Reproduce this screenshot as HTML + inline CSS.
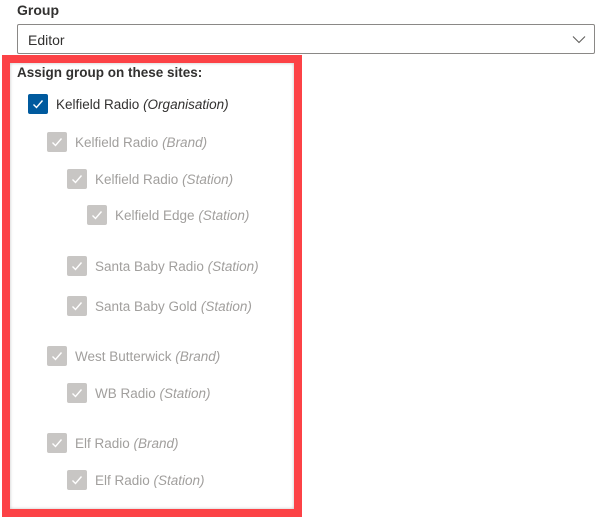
<!DOCTYPE html>
<html><head><style>
body{margin:0;width:605px;height:517px;background:#fff;font-family:"Liberation Sans",sans-serif;position:relative;overflow:hidden;color:#323130}
.a{position:absolute}
.lbl{left:17px;top:2px;font-size:14px;font-weight:bold;color:#323130}
.sel{left:17px;top:24px;width:578px;height:30px;border:1px solid #8a8886;border-radius:2px;box-sizing:border-box}
.sel span{position:absolute;left:10px;top:7px;font-size:14px}
.box{left:2px;top:55px;width:300px;height:462px;border:8px solid #fc4246;box-sizing:border-box;box-shadow:inset 0 0 3px rgba(0,0,0,.25)}
.hd{left:17px;top:65px;font-size:13.5px;font-weight:bold}
.r{position:absolute;height:20px;font-size:13.5px;line-height:21px;color:#a19f9d;white-space:nowrap}
.r i{font-style:italic}
.cb{display:inline-block;width:20px;height:20px;border-radius:2px;background:#c8c6c4;vertical-align:top;margin-right:8px;position:relative}
.cb svg{position:absolute;left:3px;top:3px}
.on{color:#323130}
.on .cb{background:#005a9e}
</style></head><body>
<div class="a lbl">Group</div>
<div class="a sel"><span>Editor</span>
<svg class="a" style="right:8px;top:9px" width="14" height="10" viewBox="0 0 14 10"><path d="M1 2.5L7 8.5L13 2.5" fill="none" stroke="#605e5c" stroke-width="1.1"/></svg></div>
<div class="a box"></div>
<div class="a hd">Assign group on these sites:</div>
<div class="r on" style="left:28px;top:94px"><span class="cb"><svg width="14" height="14" viewBox="0 0 14 14"><path d="M2.5 7.5L5.5 10.5L11.5 3.5" fill="none" stroke="#fff" stroke-width="1.4"/></svg></span>Kelfield Radio <i>(Organisation)</i></div>
<div class="r" style="left:47px;top:132px"><span class="cb"><svg width="14" height="14" viewBox="0 0 14 14"><path d="M2.5 7.5L5.5 10.5L11.5 3.5" fill="none" stroke="#fff" stroke-width="1.4"/></svg></span>Kelfield Radio <i>(Brand)</i></div>
<div class="r" style="left:67px;top:169px"><span class="cb"><svg width="14" height="14" viewBox="0 0 14 14"><path d="M2.5 7.5L5.5 10.5L11.5 3.5" fill="none" stroke="#fff" stroke-width="1.4"/></svg></span>Kelfield Radio <i>(Station)</i></div>
<div class="r" style="left:87px;top:205px"><span class="cb"><svg width="14" height="14" viewBox="0 0 14 14"><path d="M2.5 7.5L5.5 10.5L11.5 3.5" fill="none" stroke="#fff" stroke-width="1.4"/></svg></span>Kelfield Edge <i>(Station)</i></div>
<div class="r" style="left:67px;top:256px"><span class="cb"><svg width="14" height="14" viewBox="0 0 14 14"><path d="M2.5 7.5L5.5 10.5L11.5 3.5" fill="none" stroke="#fff" stroke-width="1.4"/></svg></span>Santa Baby Radio <i>(Station)</i></div>
<div class="r" style="left:67px;top:296px"><span class="cb"><svg width="14" height="14" viewBox="0 0 14 14"><path d="M2.5 7.5L5.5 10.5L11.5 3.5" fill="none" stroke="#fff" stroke-width="1.4"/></svg></span>Santa Baby Gold <i>(Station)</i></div>
<div class="r" style="left:47px;top:346px"><span class="cb"><svg width="14" height="14" viewBox="0 0 14 14"><path d="M2.5 7.5L5.5 10.5L11.5 3.5" fill="none" stroke="#fff" stroke-width="1.4"/></svg></span>West Butterwick <i>(Brand)</i></div>
<div class="r" style="left:67px;top:383px"><span class="cb"><svg width="14" height="14" viewBox="0 0 14 14"><path d="M2.5 7.5L5.5 10.5L11.5 3.5" fill="none" stroke="#fff" stroke-width="1.4"/></svg></span>WB Radio <i>(Station)</i></div>
<div class="r" style="left:47px;top:433px"><span class="cb"><svg width="14" height="14" viewBox="0 0 14 14"><path d="M2.5 7.5L5.5 10.5L11.5 3.5" fill="none" stroke="#fff" stroke-width="1.4"/></svg></span>Elf Radio <i>(Brand)</i></div>
<div class="r" style="left:67px;top:470px"><span class="cb"><svg width="14" height="14" viewBox="0 0 14 14"><path d="M2.5 7.5L5.5 10.5L11.5 3.5" fill="none" stroke="#fff" stroke-width="1.4"/></svg></span>Elf Radio <i>(Station)</i></div>
</body></html>
